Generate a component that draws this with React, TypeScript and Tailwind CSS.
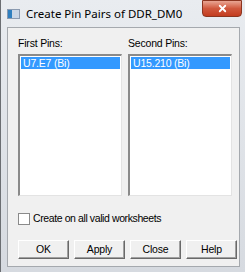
import { X } from 'lucide-react';

const font = {
  fontFamily: '"Liberation Sans", Arial, sans-serif',
};

function ListBox({ item }: { item: string }) {
  return (
    <div className="w-[104px] h-[142px] bg-white border-t-2 border-l-2 border-b border-r border-t-[#8a8a8a] border-l-[#8a8a8a] border-b-[#e3e3e3] border-r-[#e3e3e3] p-[1px]">
      <div className="h-[12px] bg-[#3399ff] text-white text-[10.5px] tracking-[-0.2px] leading-[12px] pl-[2px]">
        {item}
      </div>
    </div>
  );
}

function Btn({ label }: { label: string }) {
  return (
    <button className="w-[51px] h-[19px] bg-[#f0f0f0] border border-t-white border-l-white border-b-[#696969] border-r-[#696969] shadow-[inset_-1px_-1px_0_#a0a0a0] text-[10.5px] tracking-[-0.2px] text-black leading-none">
      {label}
    </button>
  );
}

export default function App() {
  return (
    <div
      className="relative w-[245px] h-[272px] bg-gradient-to-b from-[#e9ecf0] to-[#d6dae0] border-l border-l-[#6b6e72] flex flex-col overflow-hidden"
      style={font}
    >
      {/* Title bar */}
      <div className="h-[27px] flex items-center pl-[6px] gap-[6px]">
        <div className="w-[13px] h-[10px] border border-[#8a9ab0] bg-white flex">
          <div className="w-[4px] bg-[#2f7fbf]" />
          <div className="flex-1 bg-[#c9d6e6]" />
        </div>
        <span
          className="text-black"
          style={{ fontFamily: '"Noto Sans", sans-serif', fontSize: 11.5 }}
        >
          Create Pin Pairs of DDR_DM0
        </span>
      </div>

      {/* Close */}
      <div className="absolute top-0 right-[3px] w-[40px] h-[17px] rounded-b-[4px] bg-gradient-to-b from-[#e8a593] via-[#d0583d] to-[#c33c1f] border border-[#8c3520] flex items-center justify-center">
        <X className="w-[13px] h-[11px] text-white" strokeWidth={4} />
      </div>

      {/* Content */}
      <div className="ml-[6px] mr-[5px] mb-[5px] flex-1 bg-[#f0f0f0] border border-[#a5a9ae] pl-[10px] pt-[8px]">
        <div className="flex gap-[6px] text-[10.5px] tracking-[-0.2px] text-black h-[18px]">
          <div className="w-[104px]">First Pins:</div>
          <div className="w-[104px]">Second Pins:</div>
        </div>
        <div className="flex gap-[6px]">
          <ListBox item="U7.E7 (Bi)" />
          <ListBox item="U15.210 (Bi)" />
        </div>
        <div className="flex items-center gap-[3px] mt-[16px] h-[13px]">
          <div className="w-[12px] h-[12px] bg-white border border-[#8a8a8a]" />
          <span className="text-[10.5px] tracking-[-0.4px] text-black">
            Create on all valid worksheets
          </span>
        </div>
        <div className="flex gap-[5px] mt-[15px]">
          <Btn label="OK" />
          <Btn label="Apply" />
          <Btn label="Close" />
          <Btn label="Help" />
        </div>
      </div>
    </div>
  );
}
